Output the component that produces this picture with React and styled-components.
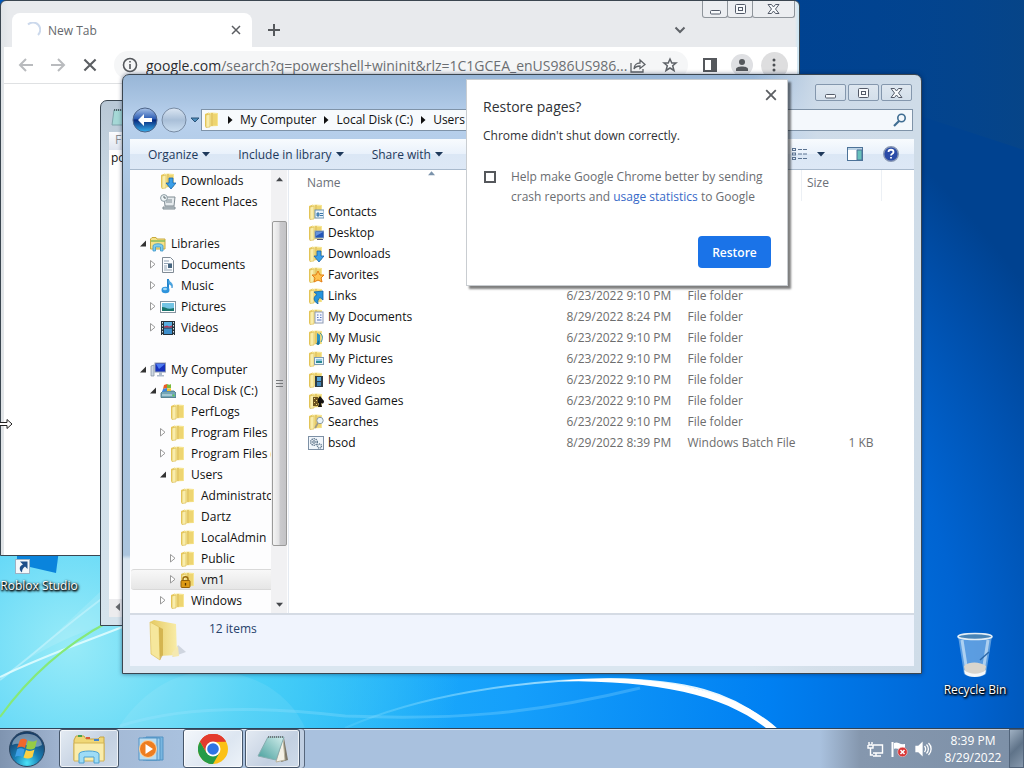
import React from 'react';
import styled, { createGlobalStyle, css } from 'styled-components';

const GlobalStyle = createGlobalStyle`
  * {
    box-sizing: border-box;
  }

  body {
    margin: 0;
    font-family: "Open Sans", "Noto Sans", sans-serif;
    font-size: 12px;
    color: #111;
    overflow: hidden;
  }

  button, input {
    font: inherit;
    color: inherit;
  }

  button {
    border: 0;
    padding: 0;
    background: none;
  }

  svg {
    display: block;
    flex-shrink: 0;
  }
`;

/* ---------- desktop ---------- */

const Desktop = styled.div`
  position: relative;
  display: flex;
  flex-direction: column;
  height: 100vh;
  background:
    radial-gradient(ellipse 38% 50% at 7% 84%, #98ebf8 0%, rgba(80, 212, 246, 0.85) 48%, rgba(30, 180, 250, 0) 100%),
    radial-gradient(ellipse 95% 105% at 18% 90%, #22bdf8 0%, #159ffb 34%, #0080f2 60%, #0064d2 80%, #004fab 92%, #004290 100%);
`;

const WallpaperArt = styled.svg`
  position: absolute;
  inset: 0;
  width: 100%;
  height: 100%;
`;

const Workspace = styled.main`
  position: relative;
  flex: 1;
  min-height: 0;
`;

const DesktopIcon = styled.a`
  position: absolute;
  display: flex;
  flex-direction: column;
  align-items: center;
  gap: 4px;
  width: 80px;
  line-height: 16px;
  color: #fff;
  text-decoration: none;
  white-space: nowrap;
  text-shadow: 0 1px 2px #000, 1px 1px 2px #000, 1px 1px 3px #000;
`;

const RobloxShortcut = styled(DesktopIcon)`
  left: -1px;
  top: 534px;
`;

const RecycleBin = styled(DesktopIcon)`
  right: 9px;
  bottom: 30px;
`;

const Pointer = styled.svg`
  position: absolute;
  left: 0;
  top: 417px;
`;

const Window = styled.section`
  position: absolute;
  display: flex;
  flex-direction: column;
  border: 1px solid #3b4650;
  overflow: hidden;
`;

const CaptionGroup = styled.div`
  display: flex;
  align-self: flex-start;
  gap: ${({ $gap }) => $gap || 0}px;
  margin-right: ${({ $inset }) => $inset || 0}px;
`;

const CaptionButton = styled.button`
  display: flex;
  align-items: center;
  justify-content: center;
  width: ${({ $width }) => $width || 31}px;
  height: 17px;
  border: 1px solid #8497ad;
  border-radius: 2px;
  background: linear-gradient(rgba(255, 255, 255, 0.35), rgba(255, 255, 255, 0.1));

  ${({ $flat }) => $flat && css`
    border-color: #8f959b;
    border-top: 0;
    border-radius: 0 0 3px 3px;
    margin-right: -1px;
    background: #eceef1;
  `}
`;

/* ---------- browser ---------- */

const BrowserWindow = styled(Window)`
  left: 0;
  right: 224px;
  top: 0;
  bottom: 172px;
  padding: 0 2px 0 3px;
  border-radius: 6px 6px 0 0;
  background: linear-gradient(90deg, #dfe3e6, #e8eaed 8px, #e8eaed calc(100% - 4px), #c9e6f5);
`;

const TabStrip = styled.div`
  display: flex;
  height: 46px;
  padding-left: 8px;
`;

const Tab = styled.div`
  display: flex;
  align-items: center;
  width: 240px;
  margin-top: 12px;
  padding: 0 11px 0 13px;
  border-radius: 8px 8px 0 0;
  background: #fff;
  color: #65686c;
`;

const TabTitle = styled.span`
  flex: 1;
  margin-left: 7px;
`;

const StripButton = styled.button`
  width: 28px;
  display: flex;
  justify-content: center;
  align-items: center;
  padding-top: 12px;
  margin: ${({ $chevron }) => ($chevron ? '0 8px 0 auto' : '0 0 0 8px')};
`;

const BrowserBar = styled.div`
  display: flex;
  align-items: center;
  height: 37px;
  padding: 0 7px 0 6px;
  border-bottom: 1px solid #dfe1e3;
  background: #fff;
`;

const BarButton = styled.button`
  display: flex;
  align-items: center;
  justify-content: center;
  flex-shrink: 0;
  width: 32px;
  height: 28px;
`;

const RoundBadge = styled.span`
  display: flex;
  align-items: center;
  justify-content: center;
  width: ${({ $size }) => $size}px;
  height: ${({ $size }) => $size}px;
  border-radius: 50%;
  background: ${({ $tone }) => $tone};
`;

const Omnibox = styled.div`
  display: flex;
  align-items: center;
  flex: 1;
  min-width: 0;
  height: 28px;
  margin: 0 6px 0 8px;
  padding: 0 2px 0 8px;
  border-radius: 14px;
  background: #f5f6f7;
`;

const Address = styled.a`
  flex: 1;
  min-width: 0;
  margin: 0 -6px 0 8px;
  overflow: hidden;
  font-size: 14px;
  white-space: nowrap;
  text-decoration: none;
  color: #6b6e72;

  b {
    font-weight: 400;
    color: #2b2d30;
  }
`;

const BrowserPage = styled.div`
  flex: 1;
  background: #fff;
`;

const RestoreBubble = styled.div`
  position: absolute;
  top: 79px;
  right: 236px;
  width: 322px;
  padding: 15px 16px 17px;
  border: 1px solid #c9cdd1;
  background: #fff;
  color: #303236;
  box-shadow: 3px 3px 2px rgba(0, 0, 0, 0.5);
`;

const BubbleClose = styled.button`
  position: absolute;
  top: 9px;
  right: 10px;
`;

const BubbleTitle = styled.h2`
  margin: 0;
  font-size: 14px;
  font-weight: 400;
  line-height: 24px;
`;

const BubbleText = styled.p`
  margin: 7px 0 21px;
  line-height: 20px;
`;

const ReportChoice = styled.div`
  display: flex;
  gap: 15px;
  line-height: 20px;
  color: #6a6d71;

  input {
    appearance: none;
    flex-shrink: 0;
    width: 12px;
    height: 12px;
    margin: 4px 0 0 1px;
    border: 2px solid #55585c;
    background: #fff;
  }

  a {
    color: #3769c8;
    text-decoration: none;
  }
`;

const RestoreButton = styled.button`
  display: block;
  width: 73px;
  height: 32px;
  margin: 29px 0 0 auto;
  border-radius: 4px;
  background: #1a73e8;
  color: #fff;
  font-weight: 600;
`;

/* ---------- notepad ---------- */

const NotepadWindow = styled(Window)`
  left: 100px;
  right: 300px;
  top: 100px;
  bottom: 102px;
  padding: 0 8px 8px;
  border-radius: 7px 7px 0 0;
  background: linear-gradient(#b9c8d6, #cddce6 20%, #d5e3ec);
`;

const NotepadTitle = styled.div`
  display: flex;
  align-items: center;
  height: 31px;
  padding-left: 2px;
`;

const NotepadMenu = styled.div`
  height: 18px;
  padding-left: 6px;
  background: linear-gradient(#fbfcfe, #dfe5ef);
  line-height: 16px;
  color: #8a8d92;
`;

const NotepadPage = styled.div`
  flex: 1;
  padding-left: 2px;
  background: #fff;
  line-height: 16px;
`;

const NotepadScroll = styled.div`
  height: 18px;
  padding: 4px 5px;
  background: #ececee;
`;

/* ---------- explorer ---------- */

const ExplorerWindow = styled(Window)`
  left: 122px;
  right: 102px;
  top: 74px;
  bottom: 54px;
  padding: 0 7px 7px;
  border-radius: 7px 7px 0 0;
  background:
    linear-gradient(90deg, transparent 79%, rgba(211, 222, 233, 0.85) 87%, #cfdce8),
    linear-gradient(#98b6d7 0, #a9c4e2 24px, #b9d1ed 44px, #a8c4e0 120px, #abc5de 480px, #dae6f0 484px);
  box-shadow: 0 0 4px rgba(0, 20, 60, 0.5);
`;

const ExplorerTitle = styled.div`
  display: flex;
  justify-content: flex-end;
  height: 32px;
  padding: 9px 2px 0 0;
`;

const NavRow = styled.div`
  display: flex;
  align-items: center;
  height: 26px;
  padding: 0 1px 0 2px;
`;

const NavButton = styled.button`
  display: flex;
  align-items: center;
  justify-content: center;
  margin-right: 3px;
`;

const NavDrop = styled(NavButton)`
  width: 10px;
  margin-right: 1px;
`;

const AddressBar = styled.nav`
  display: flex;
  align-items: center;
  flex: 1;
  gap: 6px;
  height: 22px;
  padding-left: 2px;
  border: 1px solid #7f93a8;
  background: #f7fafd;
  line-height: 18px;

  a {
    color: #111;
    text-decoration: none;
  }
`;

const SearchBox = styled.label`
  display: flex;
  align-items: center;
  width: 200px;
  height: 22px;
  margin-left: 8px;
  padding-right: 5px;
  border: 1px solid #7f93a8;
  background: #f4f8fc;

  input {
    flex: 1;
    min-width: 0;
    border: 0;
    background: none;
  }
`;

const CommandBar = styled.div`
  display: flex;
  align-items: center;
  height: 31px;
  margin-top: 6px;
  padding: 0 15px 0 18px;
  border-bottom: 1px solid #a9bacd;
  background: linear-gradient(#f8fbfe, #e9f1fb 50%, #dbe7f5 50%, #dde8f6);
  color: #1e395b;
`;

const Command = styled.button`
  display: flex;
  align-items: center;
  gap: 4px;
  margin-right: ${({ $space }) => $space || 0}px;
`;

const CommandSpacer = styled.div`
  flex: 1;
`;

const Panes = styled.div`
  display: flex;
  flex: 1;
  min-height: 0;
  background: #fdfdfe;
`;

const Tree = styled.ul`
  width: 141px;
  margin: 0;
  padding: 0;
  overflow: hidden;
  list-style: none;
`;

const TreeRow = styled.li`
  display: flex;
  align-items: center;
  height: 21px;
  padding-left: ${({ $level }) => 9 + $level * 10}px;
  white-space: nowrap;

  svg + span {
    margin-left: 5px;
  }

  ${({ $selected }) => $selected && css`
    margin-left: 1px;
    padding-left: ${({ $level }) => 8 + $level * 10}px;
    border: solid #d9d9d9;
    border-width: 1px 0;
    border-radius: 3px 0 0 3px;
    background: linear-gradient(#f8f8f8, #e6e6e6);
  `}
`;

const Twisty = styled.button`
  flex-shrink: 0;
  width: 11px;
  height: 11px;
`;

const ScrollBar = styled.div`
  display: flex;
  flex-direction: column;
  align-items: center;
  width: 16px;
  padding: 6px 0 5px;
  background: #f1f1f3;
`;

const ScrollThumb = styled.div`
  display: flex;
  align-items: center;
  justify-content: center;
  width: 15px;
  height: 325px;
  margin-top: 38px;
  border: 1px solid #9a9a9a;
  border-radius: 2px;
  background: linear-gradient(90deg, #f4f4f4, #e2e2e4 45%, #cacacd 55%, #c3c3c6);
`;

const ScrollEnd = styled.div`
  margin-top: auto;
`;

const FilePane = styled.div`
  flex: 1;
  margin-left: 1px;
  padding-left: 13px;
  border-left: 1px solid #e5eaf1;
  background: #fff;
  overflow: hidden;
`;

const FileTable = styled.table`
  width: 580px;
  border-collapse: collapse;
  table-layout: fixed;
  white-space: nowrap;

  th {
    position: relative;
    height: 31px;
    padding: 0 5px 6px;
    font-weight: 400;
    text-align: left;
    color: #6b7078;
    border-right: 1px solid #ecf0f5;
  }

  td {
    height: 21px;
    padding: 0 6px;
    color: #6d6d6d;
  }

  td:last-child {
    padding-right: 8px;
    text-align: right;
  }
`;

const SortMark = styled.span`
  position: absolute;
  top: 0;
  left: 126px;
`;

const FileName = styled.span`
  display: flex;
  align-items: center;
  gap: 4px;
  color: #111;
`;

const DetailsPane = styled.footer`
  display: flex;
  height: 53px;
  padding: 4px 0 0 16px;
  border-top: 2px solid #d5dbe4;
  background: #f0f4fd;
  color: #26426b;
`;

const ItemCount = styled.span`
  margin-left: 21px;
  line-height: 20px;
`;

/* ---------- taskbar ---------- */

const Taskbar = styled.footer`
  position: relative;
  display: flex;
  height: 40px;
  border-top: 1px solid #2f4358;
  box-shadow: inset 0 1px 0 rgba(255, 255, 255, 0.55);
  background: linear-gradient(90deg, #7f94b0, #a0b4d0 60px, #a9c1de 180px, #a9c1de 820px, #8597ae 860px, #7d90a7);
`;

const StartButton = styled.button`
  width: 59px;
  padding-left: 8px;
`;

const TaskButton = styled.button`
  display: flex;
  align-items: center;
  justify-content: center;
  width: 60px;
  margin-right: 2px;
  border: 1px solid transparent;

  ${({ $open }) => $open && css`
    border-color: #46566a;
    border-radius: 3px;
    background: linear-gradient(135deg, #e4ebf3, #c3d0e1 60%, #cfdbe9);
    box-shadow: inset 0 0 0 1px rgba(255, 255, 255, 0.7);
  `}

  ${({ $front }) => $front && css`
    background: linear-gradient(135deg, #f3f7fb, #dde6f1 60%, #edf3f9);
  `}

  ${({ $stacked }) => $stacked && css`
    width: 55px;
    box-shadow: inset 0 0 0 1px rgba(255, 255, 255, 0.7), 4px 0 0 0 #c0cfe2, 5px 0 0 0 #57677c;
  `}
`;

const Tray = styled.div`
  display: flex;
  align-items: center;
  gap: 7px;
  margin-left: auto;
`;

const Clock = styled.time`
  width: 70px;
  margin-left: -1px;
  line-height: 17px;
  text-align: center;
  color: #fff;
`;

const ShowDesktop = styled.button`
  width: 15px;
  margin-left: 1px;
  border: 1px solid #52647a;
  background: linear-gradient(135deg, #9fb0c2, #5f7389 50%, #8799ad);
`;

/* ---------- drawings ---------- */

const Wallpaper = () => (
  <WallpaperArt viewBox="0 0 1024 768" preserveAspectRatio="none" aria-hidden="true">
    <defs>
      <linearGradient id="arc" x1="0" x2="1">
        <stop offset="0" stopColor="#7fdcff" stopOpacity="0.2" />
        <stop offset="0.6" stopColor="#d8f4ff" stopOpacity="0.9" />
        <stop offset="1" stopColor="#fff" />
      </linearGradient>
      <linearGradient id="dusk" x1="0" x2="1">
        <stop offset="0" stopColor="#00489a" stopOpacity="0" />
        <stop offset="1" stopColor="#0d4780" stopOpacity="0.5" />
      </linearGradient>
    </defs>
    <path d="M780 0H1024V150L780 70Z" fill="url(#dusk)" />
    <path d="M0 680C40 650 70 620 100 592V626C60 640 30 655 0 680Z" fill="#fff" opacity="0.12" />
    <path d="M0 680C40 650 70 620 125 582" stroke="#d8f8ff" strokeWidth="2" fill="none" opacity="0.45" />
    <path d="M0 677C45 655 90 640 130 624" stroke="#eaffff" strokeWidth="2" fill="none" opacity="0.8" />
    <path d="M0 717C30 675 65 645 108 622" stroke="#86e978" strokeWidth="2" fill="none" />
    <path d="M118 728C150 680 190 668 225 672C270 678 295 705 305 728Z" fill="#fff" opacity="0.08" />
    <path d="M120 726C180 706 260 706 345 716C450 720 530 715 640 688" stroke="#a8e8ff" strokeWidth="3" fill="none" opacity="0.25" />
    <path d="M345 728C420 695 520 680 610 679C680 680 735 690 776 731" stroke="url(#arc)" strokeWidth="2" fill="none" />
    <path d="M560 681C650 672 736 688 781 732H771C728 696 665 681 560 681Z" fill="#fff" />
  </WallpaperArt>
);

const FolderShape = () => (
  <>
    <path d="M1 2L5 0.5V14L2 15.5L1 14Z" fill="#e9c95c" />
    <path d="M4 1L8 0.5L14 1V14L4 14.5Z" fill="#f6e594" />
    <path d="M8 1V14" stroke="#d3ac3d" />
    <path d="M2 3L6 2V15L2 15.5Z" fill="#f9edab" stroke="#d9b84e" strokeWidth="0.6" />
    <path d="M9 2H13V13.5H9Z" fill="#eed571" />
  </>
);

const overlays = {
  plain: null,
  contacts: <><rect x="7" y="6" width="9" height="8" fill="#eaf4fb" stroke="#6b94b5" /><path d="M9 9h2v3H9zM12 9.5h3M12 11.5h3" stroke="#3b76a8" fill="#5b9dd0" /></>,
  desktop: <><rect x="7" y="6" width="9" height="7" fill="#2456b8" stroke="#8fa6ba" /><path d="M8 7l7 0l-7 4z" fill="#6794dd" /><path d="M9 14.5h6" stroke="#557" /></>,
  downloads: <path d="M9 5h4v5h3l-5 6l-5-6h3z" fill="#3b9fe8" stroke="#1763ac" strokeWidth="0.8" />,
  favorites: <path d="M10 4l2 4h4l-3 3l1 4l-4-2l-4 2l1-4l-3-3h4z" fill="#ffc24f" stroke="#e37e16" />,
  links: <path d="M6 4L15 3V12L12 9.500C10 11 9.500 13 10 16C5 13 5 9 9 6.500Z" fill="#2594dd" stroke="#0f62a5" strokeWidth="0.8" />,
  documents: <><rect x="7" y="3" width="8" height="11" fill="#f3f6ff" stroke="#8e9bb5" /><path d="M9 6h1.500M12 6h1.500M9 8.500h1.500M12 8.500h1.500M9 11h4.500" stroke="#5574bd" /></>,
  music: <><path d="M9 3L12 5V14L9 15Z" fill="#2a93c4" /><path d="M8 14L11 10V15Z" fill="#1d7097" /><path d="M12 3c3 2 3 6 1 9" stroke="#3a8f9c" fill="none" /></>,
  pictures: <><rect x="6.5" y="6.5" width="9" height="7" fill="#e5f3f9" stroke="#7f9bb2" /><path d="M8 8h6v2H8z" fill="#8fc7e4" /><path d="M8 10h6v2H8z" fill="#2b8b93" /></>,
  videos: <><rect x="7" y="4" width="8" height="11" fill="#2d3c47" /><rect x="9" y="5" width="4" height="4" fill="#56a4d8" /><rect x="9" y="10" width="4" height="4" fill="#3f83b5" /></>,
  games: <><path d="M12 3l4 5c0 3-2 3-3 2l1 4h-4l1-4c-2 1-3-1-2-3z" fill="#161310" /><path d="M5 4h5v9H5z" fill="#6d5320" /><path d="M6 5h1v1H6zM8 7h1v1H8zM6 9h1v1H6zM8 11h1v1H8z" fill="#f4dc7c" /></>,
  searches: <><circle cx="12" cy="6.500" r="3.2" fill="#e9f4fb" stroke="#8c9aa5" /><path d="M10 9l-3 5" stroke="#9e9a85" strokeWidth="1.6" /></>,
  lock: <><path d="M3 9V7c0-3 5-3 5 0v2" fill="none" stroke="#96690e" strokeWidth="1.4" /><rect x="1" y="8.5" width="9" height="7" rx="1" fill="#dd9a16" stroke="#95620a" /><path d="M5.500 11v2.500" stroke="#553300" strokeWidth="1.3" /></>,
};

const FolderIcon = ({ kind = 'plain' }) => (
  <svg width="16" height="16" viewBox="0 0 16 16" aria-hidden="true">
    <FolderShape />
    {overlays[kind]}
  </svg>
);

const glyphs = {
  recent: <><path d="M4 3h11l-1 9H5z" fill="#e6ebee" stroke="#7f8b92" /><path d="M6 6h6M6 8h6M3 13h12v2H3z" stroke="#7f8b92" fill="#c7cfd4" /><circle cx="4" cy="4" r="3.4" fill="#eef4f6" stroke="#8b9aa2" /><path d="M4 2v2h2" stroke="#59666d" fill="none" /></>,
  libraries: <><path d="M0.500 3L2 1.500h4L7 3h8v10H0.500z" fill="#f5e289" stroke="#c8aa3e" /><path d="M1 5h14" stroke="#86b85c" strokeWidth="1.5" /><path d="M3 15V10c0-3 10-3 10 0v5h-2.500v-4h-5v4z" fill="#7dcdf0" stroke="#3a95c9" strokeWidth="0.8" /></>,
  page: <><path d="M2.500 0.500h8l3 3v12h-11z" fill="#fafcfe" stroke="#818b95" /><path d="M4 4h5M4 6.500h8M4 9h3M4 11h3M4 13h8" stroke="#95a5b5" /><rect x="8" y="7" width="4" height="4" fill="#466580" /></>,
  note: <><path d="M8 1v11" stroke="#2484cc" strokeWidth="2" /><path d="M8 1c1 3 6 4 4 9c0-3-2-4-4-4z" fill="#49a9e4" stroke="#2484cc" strokeWidth="0.6" /><ellipse cx="5.500" cy="12" rx="4" ry="3.300" fill="#2e94dc" /><ellipse cx="5" cy="11" rx="2" ry="1.200" fill="#9fd7f6" /></>,
  picture: <><rect x="0.500" y="2.500" width="15" height="11" fill="#fff" stroke="#8594a0" /><rect x="2" y="4" width="12" height="8" fill="#74c4e4" /><path d="M2 12V8c4 0 5 3 12 1v3z" fill="#19756d" /></>,
  film: <><rect x="1" y="1" width="14" height="14" fill="#26323a" /><rect x="4" y="2" width="8" height="5.500" fill="#58aee0" /><rect x="4" y="8.500" width="8" height="5.500" fill="#3e8fcb" /><path d="M4 6.500l3-1l2 1l3-1v2H4z" fill="#b4375a" /><path d="M2.500 2v13M13.500 2v13" stroke="#d8e2e8" strokeDasharray="1.5 1.500" /></>,
  computer: <><path d="M1 4l3-1v11H1z" fill="#ced8e2" stroke="#7e8e9e" strokeWidth="0.7" /><rect x="5" y="1" width="10.500" height="9" fill="#1631bd" stroke="#8f9cb0" /><path d="M6 2h9l-6 5z" fill="#4d7af0" /><path d="M9 10h3v3h2v1.500H7V13h2z" fill="#b0bccb" /></>,
  drive: <><path d="M1 10l2-2h11l2 2v4.500H1z" fill="#74a6b6" stroke="#40707f" strokeWidth="0.8" /><path d="M2 12h10" stroke="#d4e9ef" /><path d="M4 2l3-1v4L3 6z" fill="#e85e28" /><path d="M7 1c2 1 3 1 4 0v4c-2 1-3 0-4 0z" fill="#79ba3c" /><path d="M3 6l4-1v3L2 9z" fill="#3b85dc" /><path d="M7 5c2 1 3 1 4 0v3H7z" fill="#f5c330" /><circle cx="13.500" cy="12.500" r="1" fill="#5cd448" /></>,
  batch: <><rect x="0.500" y="1.500" width="15" height="13" fill="#f1f6fb" stroke="#7d90a5" /><circle cx="6" cy="7" r="3.300" fill="none" stroke="#61788d" strokeWidth="1.500" strokeDasharray="1.300 0.800" /><circle cx="6" cy="7" r="1.300" fill="none" stroke="#61788d" /><circle cx="11.500" cy="11" r="2" fill="none" stroke="#61788d" strokeWidth="1.400" strokeDasharray="1 0.600" /></>,
};

const SmallIcon = ({ name }) => {
  if (glyphs[name]) {
    return <svg width="16" height="16" viewBox="0 0 16 16" aria-hidden="true">{glyphs[name]}</svg>;
  }
  return <FolderIcon kind={name} />;
};

const Triangle = ({ dir = 'down', size = 7, color = '#1e395b' }) => {
  const shapes = {
    down: 'M0 2H8L4 6.500Z',
    up: 'M0 6H8L4 1.500Z',
    right: 'M2 0L6.500 4L2 8Z',
    left: 'M6 0L1.500 4L6 8Z',
  };
  return (
    <svg width={size} height={size} viewBox="0 0 8 8" aria-hidden="true">
      <path d={shapes[dir]} fill={color} />
    </svg>
  );
};

const Cross = ({ size = 10 }) => (
  <svg width={size} height={size} viewBox="0 0 10 10" aria-hidden="true">
    <path d="M1 1L9 9M9 1L1 9" stroke="#5b5e62" strokeWidth="1.5" />
  </svg>
);

const captionShapes = {
  Minimize: <rect x="1.500" y="7.500" width="10" height="3.500" rx="1" />,
  Maximize: <><rect x="1.500" y="1.500" width="10" height="9" rx="1" /><rect x="4.500" y="4.500" width="4" height="3" /></>,
  Close: <path d="M1 1.500H4.500L6.500 4L8.500 1.500H12L8.500 6L12 10.500H8.500L6.500 8L4.500 10.500H1L4.500 6Z" />,
};

const Caption = ({ name, ...rest }) => (
  <CaptionButton aria-label={name} {...rest}>
    <svg width="13" height="12" viewBox="0 0 13 12" fill="#f8fafc" stroke="#535a68">
      {captionShapes[name]}
    </svg>
  </CaptionButton>
);

/* ---------- windows ---------- */

const Browser = () => (
  <BrowserWindow aria-label="New Tab">
    <TabStrip>
      <Tab>
        <svg width="16" height="16" viewBox="0 0 16 16" fill="none" stroke="#ccd9ec" strokeWidth="2">
          <path d="M3 2.500A7 7 0 0 1 13 13" />
        </svg>
        <TabTitle>New Tab</TabTitle>
        <button aria-label="Close tab"><Cross /></button>
      </Tab>
      <StripButton aria-label="New tab">
        <svg width="14" height="14" viewBox="0 0 14 14" stroke="#55585c" strokeWidth="2"><path d="M7 1V13M1 7H13" /></svg>
      </StripButton>
      <StripButton $chevron aria-label="Search tabs">
        <svg width="12" height="8" viewBox="0 0 12 8" fill="none" stroke="#5f6368" strokeWidth="2"><path d="M1.500 1.500L6 6L10.500 1.500" /></svg>
      </StripButton>
      <CaptionGroup $inset={3}>
        <Caption name="Minimize" $flat $width={26} />
        <Caption name="Maximize" $flat $width={26} />
        <Caption name="Close" $flat $width={43} />
      </CaptionGroup>
    </TabStrip>
    <BrowserBar>
      <BarButton aria-label="Back">
        <svg width="16" height="14" viewBox="0 0 16 14" fill="none" stroke="#b9bbbe" strokeWidth="2"><path d="M15 7H2M8 1L2 7L8 13" /></svg>
      </BarButton>
      <BarButton aria-label="Forward">
        <svg width="16" height="14" viewBox="0 0 16 14" fill="none" stroke="#b9bbbe" strokeWidth="2"><path d="M1 7H14M8 1L14 7L8 13" /></svg>
      </BarButton>
      <BarButton aria-label="Stop"><Cross size={14} /></BarButton>
      <Omnibox>
        <svg width="16" height="16" viewBox="0 0 16 16" fill="none" stroke="#55585c" strokeWidth="1.6">
          <circle cx="8" cy="8" r="6.500" /><path d="M8 7V12M8 4V5.600" />
        </svg>
        <Address href="#"><b>google.com</b>/search?q=powershell+wininit&amp;rlz=1C1GCEA_enUS986US986...</Address>
        <BarButton aria-label="Share">
          <svg width="16" height="15" viewBox="0 0 16 15" fill="none" stroke="#5f6368" strokeWidth="1.300"><path d="M1 5V14H13V11" /><path d="M4 11C4 7 7 5 10 5V2L15 6.500L10 10.500V8C7 8 5 9 4 11Z" /></svg>
        </BarButton>
        <BarButton aria-label="Bookmark">
          <svg width="16" height="16" viewBox="0 0 16 16" fill="none" stroke="#5f6368" strokeWidth="1.500"><path d="M8 2L9.800 6H14L10.700 8.800L12 13.500L8 11L4 13.500L5.300 8.800L2 6H6.200Z" /></svg>
        </BarButton>
      </Omnibox>
      <BarButton aria-label="Side panel">
        <svg width="14" height="14" viewBox="0 0 14 14"><rect x="1" y="1" width="12" height="12" fill="#fff" stroke="#55585c" strokeWidth="2" /><path d="M8 1h5v12H8z" fill="#55585c" /></svg>
      </BarButton>
      <BarButton aria-label="Profile">
        <RoundBadge $size={22} $tone="#dfe0e3">
          <svg width="14" height="14" viewBox="0 0 14 14" fill="#55585c"><circle cx="7" cy="4" r="3" /><path d="M1 13V11C1 7.500 13 7.500 13 11V13Z" /></svg>
        </RoundBadge>
      </BarButton>
      <BarButton aria-label="Menu">
        <RoundBadge $size={27} $tone="#dededf">
          <svg width="4" height="14" viewBox="0 0 4 14" fill="#4c4f53"><circle cx="2" cy="2" r="1.500" /><circle cx="2" cy="7" r="1.500" /><circle cx="2" cy="12" r="1.500" /></svg>
        </RoundBadge>
      </BarButton>
    </BrowserBar>
    <BrowserPage />
  </BrowserWindow>
);

const Notepad = () => (
  <NotepadWindow aria-label="Notepad">
    <NotepadTitle>
      <svg width="16" height="18" viewBox="0 0 16 18"><path d="M3 2h12v12L13 17H1z" fill="#a5d8d6" stroke="#80a5ac" /><path d="M3 2h12" stroke="#506068" strokeDasharray="1 1" strokeWidth="2" /></svg>
    </NotepadTitle>
    <NotepadMenu>File</NotepadMenu>
    <NotepadPage>pow</NotepadPage>
    <NotepadScroll><Triangle dir="left" size={8} color="#66696d" /></NotepadScroll>
  </NotepadWindow>
);

const tree = [
  { label: 'Downloads', icon: 'downloads', level: 1 },
  { label: 'Recent Places', icon: 'recent', level: 1 },
  null,
  { label: 'Libraries', icon: 'libraries', level: 0, state: 'open' },
  { label: 'Documents', icon: 'page', level: 1, state: 'closed' },
  { label: 'Music', icon: 'note', level: 1, state: 'closed' },
  { label: 'Pictures', icon: 'picture', level: 1, state: 'closed' },
  { label: 'Videos', icon: 'film', level: 1, state: 'closed' },
  null,
  { label: 'My Computer', icon: 'computer', level: 0, state: 'open' },
  { label: 'Local Disk (C:)', icon: 'drive', level: 1, state: 'open' },
  { label: 'PerfLogs', icon: 'plain', level: 2 },
  { label: 'Program Files', icon: 'plain', level: 2, state: 'closed' },
  { label: 'Program Files (', icon: 'plain', level: 2, state: 'closed' },
  { label: 'Users', icon: 'plain', level: 2, state: 'open' },
  { label: 'Administrato', icon: 'plain', level: 3 },
  { label: 'Dartz', icon: 'plain', level: 3 },
  { label: 'LocalAdmin', icon: 'plain', level: 3 },
  { label: 'Public', icon: 'plain', level: 3, state: 'closed' },
  { label: 'vm1', icon: 'lock', level: 3, state: 'closed', selected: true },
  { label: 'Windows', icon: 'plain', level: 2, state: 'closed' },
];

const files = [
  { name: 'Contacts', icon: 'contacts' },
  { name: 'Desktop', icon: 'desktop' },
  { name: 'Downloads', icon: 'downloads' },
  { name: 'Favorites', icon: 'favorites' },
  { name: 'Links', icon: 'links', date: '6/23/2022 9:10 PM', type: 'File folder' },
  { name: 'My Documents', icon: 'documents', date: '8/29/2022 8:24 PM', type: 'File folder' },
  { name: 'My Music', icon: 'music', date: '6/23/2022 9:10 PM', type: 'File folder' },
  { name: 'My Pictures', icon: 'pictures', date: '6/23/2022 9:10 PM', type: 'File folder' },
  { name: 'My Videos', icon: 'videos', date: '6/23/2022 9:10 PM', type: 'File folder' },
  { name: 'Saved Games', icon: 'games', date: '6/23/2022 9:10 PM', type: 'File folder' },
  { name: 'Searches', icon: 'searches', date: '6/23/2022 9:10 PM', type: 'File folder' },
  { name: 'bsod', icon: 'batch', date: '8/29/2022 8:39 PM', type: 'Windows Batch File', size: '1 KB' },
];

const TreeItem = ({ item }) => {
  if (!item) return <TreeRow $level={0} aria-hidden="true" />;
  return (
    <TreeRow $level={item.level} $selected={item.selected}>
      <Twisty aria-label={item.state ? `Toggle ${item.label}` : undefined} disabled={!item.state}>
        {item.state && (
          <svg width="8" height="9" viewBox="0 0 8 9">
            {item.state === 'open'
              ? <path d="M7 1.500V7.500H1Z" fill="#333" />
              : <path d="M1.500 0.500V8L6 4.250Z" fill="#fff" stroke="#9a9a9a" />}
          </svg>
        )}
      </Twisty>
      <SmallIcon name={item.icon} />
      <span>{item.label}</span>
    </TreeRow>
  );
};

const Explorer = () => (
  <ExplorerWindow aria-label="vm1">
    <ExplorerTitle>
      <CaptionGroup $gap={2}>
        <Caption name="Minimize" />
        <Caption name="Maximize" />
        <Caption name="Close" />
      </CaptionGroup>
    </ExplorerTitle>
    <NavRow>
      <NavButton aria-label="Back">
        <svg width="26" height="26" viewBox="0 0 26 26">
          <defs>
            <linearGradient id="back" x1="0" y1="0" x2="0" y2="1">
              <stop offset="0" stopColor="#aac4e8" />
              <stop offset="0.45" stopColor="#2c5cb4" />
              <stop offset="0.5" stopColor="#08297c" />
              <stop offset="1" stopColor="#36b0ee" />
            </linearGradient>
          </defs>
          <circle cx="13" cy="13" r="12" fill="url(#back)" stroke="#4d6488" />
          <path d="M12 7L6 13L12 19V15H20V11H12Z" fill="#fff" />
        </svg>
      </NavButton>
      <NavButton aria-label="Forward">
        <svg width="26" height="26" viewBox="0 0 26 26">
          <defs>
            <linearGradient id="forward" x1="0" y1="0" x2="0" y2="1">
              <stop offset="0" stopColor="#dce7f3" />
              <stop offset="0.5" stopColor="#a9bfd8" />
              <stop offset="1" stopColor="#ccdff1" />
            </linearGradient>
          </defs>
          <circle cx="13" cy="13" r="12" fill="url(#forward)" stroke="#788ba3" />
        </svg>
      </NavButton>
      <NavDrop aria-label="Recent pages">
        <svg width="10" height="6" viewBox="0 0 10 6"><path d="M1 1H9L5 5Z" fill="#4b8cbc" stroke="#2d5579" /></svg>
      </NavDrop>
      <AddressBar>
        <FolderIcon />
        <Triangle dir="right" size={8} color="#111" />
        <a href="#computer">My Computer</a>
        <Triangle dir="right" size={8} color="#111" />
        <a href="#disk">Local Disk (C:)</a>
        <Triangle dir="right" size={8} color="#111" />
        <a href="#users">Users</a>
      </AddressBar>
      <SearchBox>
        <input type="search" aria-label="Search" />
        <svg width="14" height="14" viewBox="0 0 14 14" fill="none" stroke="#3f6d92" strokeWidth="1.600">
          <circle cx="8.500" cy="5" r="3.700" /><path d="M6 8L1 13" strokeWidth="2.200" />
        </svg>
      </SearchBox>
    </NavRow>
    <CommandBar>
      <Command $space={28}>Organize <Triangle size={8} /></Command>
      <Command $space={28}>Include in library <Triangle size={8} /></Command>
      <Command>Share with <Triangle size={8} /></Command>
      <CommandSpacer />
      <Command $space={15} aria-label="Change view">
        <svg width="16" height="14" viewBox="0 0 16 14" fill="none" stroke="#5a7290">
          <rect x="0.500" y="1.500" width="3" height="2" /><rect x="0.500" y="6" width="3" height="2" /><rect x="0.500" y="10.500" width="3" height="2" />
          <path d="M6 2.500H15M6 7H15M6 11.500H15" strokeDasharray="4 1" />
        </svg>
        <svg width="20" height="8" viewBox="-5 0 20 8"><path d="M0 2H8L4 6.500Z" fill="#1e395b" /></svg>
      </Command>
      <Command $space={20} aria-label="Preview pane">
        <svg width="16" height="14" viewBox="0 0 16 14"><rect x="0.500" y="0.500" width="15" height="13" fill="#fff" stroke="#4c7298" /><path d="M1 1H15V3H1Z" fill="#bdd3e6" /><path d="M10 3H15V13H10Z" fill="#68c1bb" stroke="#4c7298" /></svg>
      </Command>
      <Command aria-label="Help">
        <svg width="16" height="16" viewBox="0 0 16 16">
          <circle cx="8" cy="8" r="7.300" fill="#2b4ba8" stroke="#8897b4" strokeWidth="1.400" />
          <path d="M5.500 6C5.500 3 10.500 3 10.500 6C10.500 8 8 7.500 8 9.500M8 11V12.600" stroke="#fff" strokeWidth="1.800" fill="none" />
        </svg>
      </Command>
    </CommandBar>
    <Panes>
      <Tree>
        {tree.map((item, i) => <TreeItem key={i} item={item} />)}
      </Tree>
      <ScrollBar>
        <Triangle dir="up" color="#44474b" />
        <ScrollThumb>
          <svg width="7" height="8" viewBox="0 0 7 8" stroke="#77797c"><path d="M0 0.500H7M0 3.500H7M0 6.500H7" /></svg>
        </ScrollThumb>
        <ScrollEnd><Triangle color="#44474b" /></ScrollEnd>
      </ScrollBar>
      <FilePane>
        <FileTable>
          <colgroup>
            <col />
            <col width="121" />
            <col width="120" />
            <col width="80" />
          </colgroup>
          <thead>
            <tr>
              <th>Name<SortMark><Triangle dir="up" color="#7b93ab" /></SortMark></th>
              <th aria-label="Date modified" />
              <th aria-label="Type" />
              <th>Size</th>
            </tr>
          </thead>
          <tbody>
            {files.map(({ name, icon, date, type, size }) => (
              <tr key={name}>
                <td><FileName><SmallIcon name={icon} />{name}</FileName></td>
                <td>{date}</td>
                <td>{type}</td>
                <td>{size}</td>
              </tr>
            ))}
          </tbody>
        </FileTable>
      </FilePane>
    </Panes>
    <DetailsPane>
      <svg width="42" height="42" viewBox="0 0 42 42" aria-hidden="true">
        <defs>
          <linearGradient id="bigFolder" x1="0" x2="1">
            <stop offset="0" stopColor="#e6ca62" />
            <stop offset="1" stopColor="#f8eca8" />
          </linearGradient>
        </defs>
        <path d="M26 38L40 33L32 26Z" fill="#b9bfcc" opacity="0.6" />
        <path d="M4 3L8 1L30 5L31 36L13 37Z" fill="url(#bigFolder)" />
        <path d="M26 34L32 27L33 37L27 38Z" fill="#f5e9b0" />
        <path d="M4 3L13 8L14 41L5 35Z" fill="#f6e79c" stroke="#dfc25b" strokeWidth="0.700" />
        <path d="M13 8L14 41L17 36V10Z" fill="#c9a53c" opacity="0.700" />
      </svg>
      <ItemCount>12 items</ItemCount>
    </DetailsPane>
  </ExplorerWindow>
);

const RestoreDialog = () => (
  <RestoreBubble role="dialog" aria-labelledby="restore-title">
    <BubbleClose aria-label="Close"><Cross size={12} /></BubbleClose>
    <BubbleTitle id="restore-title">Restore pages?</BubbleTitle>
    <BubbleText>Chrome didn't shut down correctly.</BubbleText>
    <ReportChoice>
      <input type="checkbox" id="report" />
      <label htmlFor="report">
        Help make Google Chrome better by sending crash reports and <a href="#stats">usage statistics</a> to Google
      </label>
    </ReportChoice>
    <RestoreButton>Restore</RestoreButton>
  </RestoreBubble>
);

const Start = () => (
  <StartButton aria-label="Start">
    <svg width="38" height="38" viewBox="0 0 38 38">
      <defs>
        <radialGradient id="orb" cx="0.5" cy="0.9" r="0.8">
          <stop offset="0" stopColor="#4be3f8" />
          <stop offset="0.45" stopColor="#1880b6" />
          <stop offset="1" stopColor="#173d68" />
        </radialGradient>
      </defs>
      <circle cx="19" cy="19" r="17.500" fill="url(#orb)" stroke="#2c455f" />
      <path d="M4 15C6 0 32 0 34 15C24 21 14 10 4 15Z" fill="#c9dae6" opacity="0.5" />
      <path d="M12 10C15 8 17 9 19 10L17 18C15 17 12 16 9 18Z" fill="#f0672c" />
      <path d="M20 10.500C23 12 26 12 29 10L27 18C24 20 21 20 18 18.500Z" fill="#96cc45" />
      <path d="M9 19.500C12 17.500 14 18.500 16.500 19.500L14.500 27C12 26 9 25.500 7 27Z" fill="#3c9fe6" />
      <path d="M18 20C21 21.500 24 21 26.500 19.500L24.500 27C21 29 18 29 15.500 27.500Z" fill="#fbd043" />
    </svg>
  </StartButton>
);

const TaskStrip = () => (
  <Taskbar>
    <Start />
    <TaskButton $open aria-label="Windows Explorer">
      <svg width="34" height="32" viewBox="0 0 34 32">
        <path d="M2 7L4 3H12L14 6H26L28 4H32V27H2Z" fill="#f0d777" stroke="#c7a544" />
        <path d="M6 2h4v2H6z" fill="#47a34c" /><path d="M14 4h4v2h-4z" fill="#d95a37" /><path d="M22 6h5v2h-5z" fill="#4385cf" />
        <path d="M2 10H32V28H2Z" fill="#faecab" stroke="#d3b457" />
        <path d="M7 30V21C7 17 27 17 27 21V30H22V24H12V30Z" fill="#9edcf6" stroke="#4da2d2" />
      </svg>
    </TaskButton>
    <TaskButton aria-label="Media Player">
      <svg width="30" height="28" viewBox="0 0 30 28">
        <path d="M10 2H27V25H10Z" fill="#78b6e0" stroke="#5293c4" /><path d="M7 3H24V25H7Z" fill="#9dcdec" stroke="#5293c4" />
        <path d="M3 3H21V25H3Z" fill="#b9dcf1" stroke="#5293c4" />
        <circle cx="12" cy="14" r="8.500" fill="#ee7d20" stroke="#fbd2a0" /><path d="M9.500 9L17 14L9.500 19Z" fill="#fff" />
      </svg>
    </TaskButton>
    <TaskButton $open $front aria-label="Google Chrome">
      <svg width="30" height="30" viewBox="0 0 30 30">
        <circle cx="15" cy="15" r="15" fill="#fbc116" />
        <path d="M2 7.500A15 15 0 0 1 28 7.500L15 8Z" fill="#e33b2e" />
        <path d="M2 7.500L8.500 18.700L15 22L15 30A15 15 0 0 1 2 7.500Z" fill="#269b48" />
        <path d="M2 7.500A15 15 0 0 1 28 7.500H15L8.500 18.500Z" fill="#e33b2e" />
        <path d="M8.500 18.700L15 22L21.500 18.800L15 30A15 15 0 0 1 9 28.700Z" fill="#269b48" />
        <circle cx="15" cy="15" r="7.500" fill="#fff" /><circle cx="15" cy="15" r="5.800" fill="#2f74e4" />
      </svg>
    </TaskButton>
    <TaskButton $open $stacked aria-label="Notepad">
      <svg width="34" height="30" viewBox="0 0 34 30">
        <defs>
          <linearGradient id="pad" x1="0" y1="1" x2="1" y2="0">
            <stop offset="0" stopColor="#459e9b" />
            <stop offset="1" stopColor="#d3eeec" />
          </linearGradient>
        </defs>
        <path d="M28 4L32 26L25 28Z" fill="#7c7768" /><path d="M27 3L29 26L20 28Z" fill="#f4f1e6" stroke="#bab49e" />
        <path d="M12 3H28L20 26L2 22Z" fill="url(#pad)" stroke="#86adb0" />
        <path d="M12 3H28" stroke="#70787d" strokeWidth="2" strokeDasharray="1 1" />
      </svg>
    </TaskButton>
    <Tray>
      <svg width="17" height="16" viewBox="0 0 17 16" fill="none" stroke="#fff" strokeWidth="1.400"><path d="M6 4H15.500V12H6M9 12V15M6 15H14" /><path d="M2 1V4H5V1M1 4V7H6V4M3.500 7V14H6" /></svg>
      <svg width="17" height="16" viewBox="0 0 17 16"><path d="M1.500 1V16" stroke="#fff" strokeWidth="2" /><path d="M3 2C7 0 8 4 14 3V9C9 11 7 6 3 8Z" fill="#fff" /><circle cx="11.500" cy="11" r="4.800" fill="#d93636" stroke="#f6d0d0" strokeWidth="0.600" /><path d="M9.500 9L13.500 13M13.500 9L9.500 13" stroke="#fff" strokeWidth="1.500" /></svg>
      <svg width="17" height="16" viewBox="0 0 17 16" fill="none" stroke="#fff" strokeWidth="1.300"><path d="M1 5.500H3.500L7 2V14L3.500 10.500H1Z" fill="#fff" /><path d="M9.500 5C11 7 11 9 9.500 11M11.500 3.500C14 6 14 10 11.500 12.500M13.500 2C17 5.500 17 10.500 13.500 14" /></svg>
      <Clock>8:39 PM<br />8/29/2022</Clock>
    </Tray>
    <ShowDesktop aria-label="Show desktop" />
  </Taskbar>
);

const App = () => (
  <>
    <GlobalStyle />
    <Desktop>
      <Wallpaper />
      <Workspace>
        <RobloxShortcut href="#roblox">
          <svg width="48" height="40" viewBox="0 0 48 40">
            <path d="M2 0H46L41 39L2 30Z" fill="#0a84dc" />
            <rect x="0.500" y="25.500" width="14" height="14" fill="#f4f8fb" stroke="#9cb2c4" />
            <path d="M5 27.500H12.500V35L10 32.500C8 34 7 35.500 7 38.500C3 35 5 31.500 8 30.500Z" fill="#1d4f8a" />
          </svg>
          Roblox Studio
        </RobloxShortcut>
        <RecycleBin href="#recycle">
          <svg width="38" height="46" viewBox="0 0 38 46">
            <path d="M2 4L8 42C12 46 26 46 30 42L36 4Z" fill="#a6cdf0" opacity="0.55" />
            <path d="M6 8L11 40M32 8L27 40" stroke="#e2f2fc" strokeWidth="3" opacity="0.6" />
            <path d="M33 20L24 28" stroke="#2b68a8" strokeWidth="1.500" />
            <path d="M8 34C14 29 24 30 30 34L29 41C24 45 13 45 9 41Z" fill="#d9d5cd" />
            <path d="M8 38C14 43 24 43 30 38L29 42C24 46 13 46 9 42Z" fill="#f6f8f9" />
            <ellipse cx="19" cy="4.500" rx="17" ry="3" fill="#4783b6" stroke="#e3eef6" strokeWidth="1.600" />
          </svg>
          Recycle Bin
        </RecycleBin>
        <Browser />
        <Notepad />
        <Explorer />
        <RestoreDialog />
        <Pointer width="14" height="14" viewBox="0 0 14 14">
          <path d="M0 5.500H7V2.500L12 7L7 11.500V8.500H0" fill="#fff" stroke="#222" />
        </Pointer>
      </Workspace>
      <TaskStrip />
    </Desktop>
  </>
);

export default App;
